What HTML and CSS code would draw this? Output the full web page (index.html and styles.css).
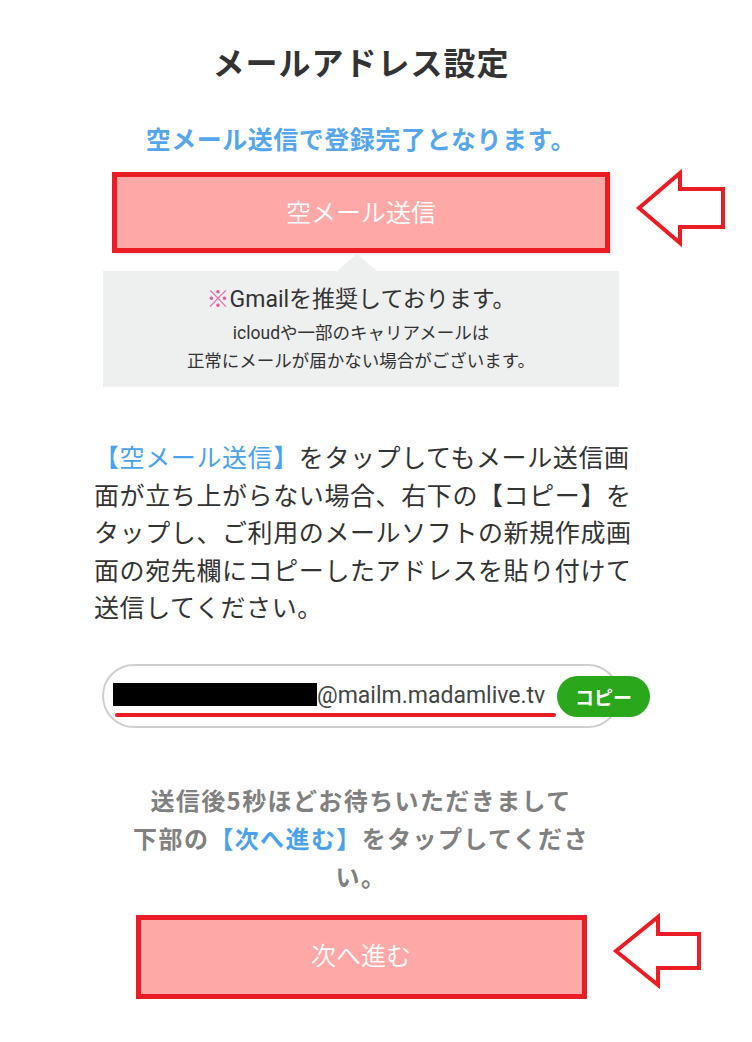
FILE: index.html
```html
<!DOCTYPE html>
<html lang="ja">
<head>
<meta charset="utf-8">
<title>メールアドレス設定</title>
<link rel="stylesheet" href="styles.css">
</head>
<body>
<div class="page">
  <h1 class="title">メールアドレス設定</h1>
  <p class="lead">空メール送信で登録完了となります。</p>

  <div class="btn-row">
    <a class="btn btn-send">空メール送信</a>
    <svg class="arrow arrow-1" width="92" height="78" viewBox="0 0 92 78" aria-hidden="true">
      <polygon points="4,39 45,4 45,20 88,20 88,58 45,58 45,74" fill="none" stroke="#ec1c24" stroke-width="4"/>
    </svg>
  </div>

  <div class="note">
    <p class="note-main"><span class="kome">※</span>Gmailを推奨しております。</p>
    <p class="note-sub">icloudや一部のキャリアメールは<br>正常にメールが届かない場合がございます。</p>
  </div>

  <p class="desc"><span class="blue">【空メール送信】</span>をタップしてもメール送信画<br>面が立ち上がらない場合、右下の【コピー】を<br>タップし、ご利用のメールソフトの新規作成画<br>面の宛先欄にコピーしたアドレスを貼り付けて<br>送信してください。</p>

  <div class="pill">
    <div class="addr">
      <div class="addr-line"><span class="mask"></span><span class="domain">@mailm.madamlive.tv</span></div>
      <div class="underline"></div>
    </div>
    <a class="copy">コピー</a>
  </div>

  <p class="wait">送信後5秒ほどお待ちいただきまして<br>下部の<span class="blue">【次へ進む】</span>をタップしてくださ<br>い。</p>

  <div class="btn-row">
    <a class="btn btn-next">次へ進む</a>
    <svg class="arrow arrow-2" width="91" height="76" viewBox="0 0 91 76" aria-hidden="true">
      <polygon points="4,38 46,4 46,21 87,21 87,55 46,55 46,72" fill="none" stroke="#ec1c24" stroke-width="4"/>
    </svg>
  </div>
</div>
</body>
</html>
```
FILE: styles.css
```css
* { box-sizing: border-box; }

html, body {
  margin: 0;
  padding: 0;
  background: #ffffff;
}

body {
  font-family: Roboto, "Noto Sans CJK JP", sans-serif;
  color: #333333;
}

.page {
  width: 722px;
  display: flex;
  flex-direction: column;
  align-items: center;
  padding-bottom: 40px;
}

.title {
  margin: 41px 0 0;
  font-size: 32px;
  line-height: 40px;
  font-weight: 700;
  letter-spacing: 1px;
  color: #333333;
  font-family: "Noto Sans CJK JP", sans-serif;
}

.lead {
  margin: 41px 0 0;
  font-size: 25px;
  line-height: 32px;
  font-weight: 700;
  letter-spacing: 0.5px;
  color: #55a6ee;
  font-family: "Noto Sans CJK JP", sans-serif;
}

.btn-row {
  position: relative;
  width: 100%;
  display: flex;
  justify-content: center;
}

.lead + .btn-row { margin-top: 18px; }

.btn {
  display: flex;
  align-items: center;
  justify-content: center;
  background: #ffa8a8;
  border: 5px solid #ec1c24;
  color: #ffffff;
  font-size: 25px;
  font-weight: 350;
  font-family: "Noto Sans CJK JP", sans-serif;
  text-decoration: none;
}

.btn-send {
  width: 498px;
  height: 81px;
  padding-bottom: 3px;
  box-shadow: 3px 2px 2px rgba(0, 0, 0, 0.08);
}

.btn-next {
  width: 451px;
  height: 84px;
  padding-bottom: 6px;
}

.arrow {
  position: absolute;
}

.arrow-1 { left: 635px; top: -3px; }
.arrow-2 { left: 612px; top: -2px; }

.note {
  position: relative;
  margin-top: 18px;
  width: 516px;
  background: #eeefef;
  padding: 14px 0 12px;
  text-align: center;
}

.note::before {
  content: "";
  position: absolute;
  left: 234px;
  top: -17px;
  border-left: 20px solid transparent;
  border-right: 20px solid transparent;
  border-bottom: 17px solid #eeefef;
}

.note p { margin: 0; }

.note-main {
  font-size: 23px;
  line-height: 30px;
  color: #333333;
}

.kome { color: #e05fa0; }

.note-sub {
  margin-top: 4px !important;
  font-size: 17.5px;
  line-height: 28px;
  color: #333333;
}

.desc {
  align-self: flex-start;
  margin: 51px 0 0 94px;
  width: 560px;
  font-size: 25px;
  line-height: 37.5px;
  letter-spacing: 0.6px;
  color: #333333;
  font-family: "Noto Sans CJK JP", sans-serif;
}

.blue { color: #4aa2ee; }

.pill {
  position: relative;
  margin-top: 38px;
  width: 518px;
  height: 64px;
  border: 2px solid #cfcfcf;
  border-radius: 32px;
  display: flex;
  align-items: center;
  padding: 8px 0 0 9px;
}

.addr {
  display: flex;
  flex-direction: column;
}

.addr-line {
  display: flex;
  align-items: center;
  height: 23px;
}

.mask {
  display: block;
  width: 204px;
  height: 23px;
  background: #000000;
}

.domain {
  font-family: Roboto, sans-serif;
  font-size: 23px;
  line-height: 23px;
  color: #444444;
  padding-top: 2px;
}

.underline {
  margin: 7px 0 0 2px;
  width: 441px;
  height: 4px;
  border-radius: 2px;
  background: #ec1c24;
}

.copy {
  position: absolute;
  right: -32px;
  top: 10px;
  width: 93px;
  height: 41px;
  border-radius: 21px;
  background: #2aa71b;
  color: #ffffff;
  font-weight: 700;
  font-size: 19px;
  display: flex;
  align-items: center;
  justify-content: center;
  font-family: "Noto Sans CJK JP", sans-serif;
}

.wait {
  margin: 53px 0 0;
  text-align: center;
  font-size: 24px;
  line-height: 38px;
  font-weight: 700;
  letter-spacing: 1.4px;
  color: #808080;
  font-family: "Noto Sans CJK JP", sans-serif;
}

.wait + .btn-row { margin-top: 20px; }
```
